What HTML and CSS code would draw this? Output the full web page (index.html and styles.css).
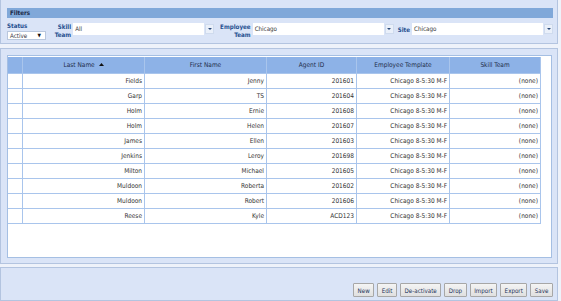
FILE: index.html
```html
<!DOCTYPE html>
<html lang="en">
<head>
    <meta charset="UTF-8">
    <title>Agents</title>
    <link rel="stylesheet" href="styles.css">
</head>
<body>
    <div class="page">
        <div class="panel filters">
            <div class="panel-title">Filters</div>
            <div class="filter-row">
                <div class="field-status">
                    <span class="label">Status</span>
                    <div class="select">Active <span class="caret">&#9660;</span></div>
                </div>
                <span class="label two-line skill-label">Skill<br>Team</span>
                <div class="combo">
                    <div class="combo-input">All</div>
                    <div class="combo-btn"><span class="mini-caret"></span></div>
                </div>
                <span class="label two-line team-label">Employee<br>Team</span>
                <div class="combo">
                    <div class="combo-input">Chicago</div>
                    <div class="combo-btn"><span class="mini-caret"></span></div>
                </div>
                <span class="label site-label">Site</span>
                <div class="combo">
                    <div class="combo-input">Chicago</div>
                    <div class="combo-btn"><span class="mini-caret"></span></div>
                </div>
            </div>
        </div>

        <div class="panel grid-panel">
            <div class="grid-box">
                <table class="grid">
                    <thead>
                        <tr>
                            <th class="col-sel"></th>
                            <th class="col-last">Last Name <svg class="sort" width="5" height="3" viewBox="0 0 5 3"><path d="M0 3 L2.5 0 L5 3 Z" fill="#111"/></svg></th>
                            <th class="col-first">First Name</th>
                            <th class="col-id">Agent ID</th>
                            <th class="col-tpl">Employee Template</th>
                            <th class="col-skill">Skill Team</th>
                        </tr>
                    </thead>
                    <tbody>
                        <tr><td></td><td>Fields</td><td>Jenny</td><td>201601</td><td>Chicago 8-5:30 M-F</td><td>(none)</td></tr>
                        <tr><td></td><td>Garp</td><td>TS</td><td>201604</td><td>Chicago 8-5:30 M-F</td><td>(none)</td></tr>
                        <tr><td></td><td>Holm</td><td>Ernie</td><td>201608</td><td>Chicago 8-5:30 M-F</td><td>(none)</td></tr>
                        <tr><td></td><td>Holm</td><td>Helen</td><td>201607</td><td>Chicago 8-5:30 M-F</td><td>(none)</td></tr>
                        <tr><td></td><td>James</td><td>Ellen</td><td>201603</td><td>Chicago 8-5:30 M-F</td><td>(none)</td></tr>
                        <tr><td></td><td>Jenkins</td><td>Leroy</td><td>201698</td><td>Chicago 8-5:30 M-F</td><td>(none)</td></tr>
                        <tr><td></td><td>Milton</td><td>Michael</td><td>201605</td><td>Chicago 8-5:30 M-F</td><td>(none)</td></tr>
                        <tr><td></td><td>Muldoon</td><td>Roberta</td><td>201602</td><td>Chicago 8-5:30 M-F</td><td>(none)</td></tr>
                        <tr><td></td><td>Muldoon</td><td>Robert</td><td>201606</td><td>Chicago 8-5:30 M-F</td><td>(none)</td></tr>
                        <tr><td></td><td>Reese</td><td>Kyle</td><td>ACD123</td><td>Chicago 8-5:30 M-F</td><td>(none)</td></tr>
                    </tbody>
                </table>
            </div>
        </div>

        <div class="panel actions">
            <button class="btn">New</button>
            <button class="btn">Edit</button>
            <button class="btn">De-activate</button>
            <button class="btn">Drop</button>
            <button class="btn">Import</button>
            <button class="btn">Export</button>
            <button class="btn">Save</button>
        </div>
    </div>
</body>
</html>
```

FILE: styles.css
```css
body {
    margin: 0;
    background-color: #eef2fa;
    font-family: "DejaVu Sans Condensed", "DejaVu Sans", sans-serif;
    font-size: 6.2px;
    color: #363340;
}

.page {
    width: 558px;
    display: flex;
    flex-direction: column;
}

.panel {
    background-color: #dae4f7;
    border: 1px solid #b3c4e0;
    box-sizing: border-box;
}

/* filters */
.filters {
    height: 44px;
    border-top: none;
    padding: 8px 4px 0 6px;
}

.panel-title {
    height: 10px;
    line-height: 10px;
    background-color: #80a8d9;
    color: #1b2a48;
    font-weight: bold;
    padding-left: 3px;
}

.filter-row {
    display: flex;
    align-items: flex-start;
    margin-top: 4px;
}

.label {
    color: #1f4f8f;
    font-weight: bold;
    line-height: 8px;
}

.two-line {
    text-align: right;
    margin-top: 1px;
}

.field-status {
    display: flex;
    flex-direction: column;
    gap: 1px;
}

.select {
    width: 39px;
    height: 9px;
    box-sizing: border-box;
    background-color: #fff;
    border: 1px solid #b9c7dd;
    line-height: 7px;
    padding-left: 2px;
    position: relative;
}

.caret {
    position: absolute;
    right: 4px;
    top: 0;
    font-size: 5px;
    color: #111;
}

.skill-label { width: 20px; margin-left: 6px; }
.team-label { width: 34px; margin-left: 4px; }
.site-label { width: 14px; margin-left: 3px; margin-top: 4px; text-align: right; }

.combo {
    display: flex;
    align-items: center;
    margin-left: 2px;
    margin-top: 1px;
}

.combo-input {
    width: 131px;
    height: 12px;
    box-sizing: border-box;
    background-color: #fff;
    line-height: 11px;
    padding-left: 2px;
    color: #333;
}

.combo-btn {
    width: 9px;
    height: 10px;
    margin-left: 1px;
    background-color: #eaf0fa;
    border: 1px solid #cfdbee;
    box-sizing: border-box;
    display: flex;
    justify-content: center;
    align-items: center;
}

.mini-caret {
    border-left: 2px solid transparent;
    border-right: 2px solid transparent;
    border-top: 2px solid #2a4a7a;
}

/* grid */
.grid-panel {
    height: 216px;
    margin-top: 4px;
    padding: 6px 5px 5px 6px;
}

.grid-box {
    height: 203px;
    box-sizing: border-box;
    background-color: #fff;
    border: 1px solid #a5bfe3;
    padding-top: 1px;
}

.grid {
    border-collapse: collapse;
    width: 527px;
    table-layout: fixed;
    font-size: 6.5px;
}

.grid th {
    background-color: #8db2e7;
    color: #1f2d4a;
    font-weight: normal;
    height: 16px;
    padding: 0;
    border: 1px solid #a9c5ec;
    border-top: none;
}

.grid td {
    height: 14px;
    padding: 0 2px 0 0;
    text-align: right;
    border: 1px solid #a9c5ec;
    white-space: nowrap;
    color: #333;
}

.grid tr > :first-child { border-left: none; }

.sort { margin-left: 2px; vertical-align: 1px; }

.col-sel { width: 14px; }
.col-last { width: 121px; }
.col-first { width: 121px; }
.col-id { width: 89px; }
.col-tpl { width: 92px; }
.col-skill { width: 90px; }

/* actions */
.actions {
    height: 34px;
    margin-top: 3px;
    display: flex;
    justify-content: flex-end;
    align-items: flex-end;
    gap: 3px;
    padding: 0 4px 3px 0;
}

.btn {
    height: 14px;
    padding: 0 3.5px;
    font-family: inherit;
    font-size: 6.2px;
    color: #24325a;
    background: linear-gradient(#f4f4f4, #e0e0e0);
    border: 1px solid #a7a7a7;
    border-radius: 1px;
}
```
